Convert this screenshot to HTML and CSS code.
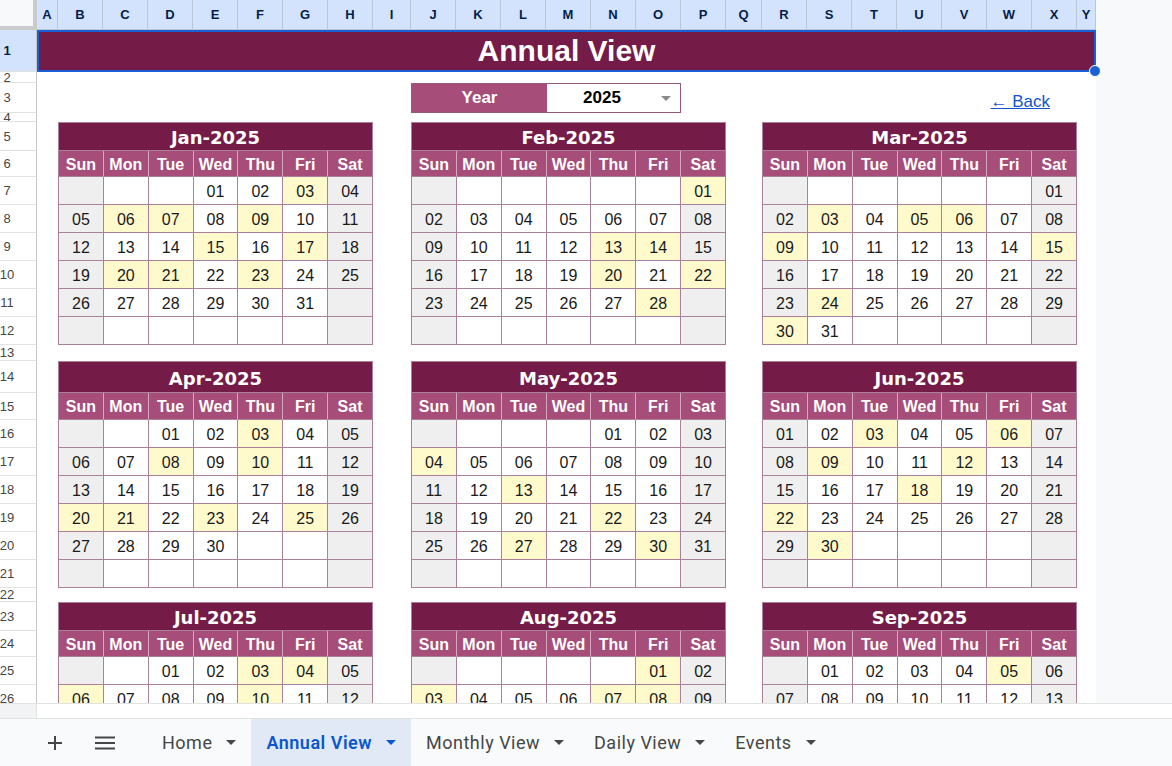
FILE: index.html
```html
<!DOCTYPE html>
<html lang="en">
<head>
<meta charset="utf-8">
<title>Annual View</title>
<link rel="stylesheet" href="styles.css">
</head>
<body>
<div class="sheet-area">
  <div class="grid">
    <div class="corner"></div>
    <div class="ch">A</div><div class="ch">B</div><div class="ch">C</div><div class="ch">D</div><div class="ch">E</div><div class="ch">F</div><div class="ch">G</div><div class="ch">H</div><div class="ch">I</div><div class="ch">J</div><div class="ch">K</div><div class="ch">L</div><div class="ch">M</div><div class="ch">N</div><div class="ch">O</div><div class="ch">P</div><div class="ch">Q</div><div class="ch">R</div><div class="ch">S</div><div class="ch">T</div><div class="ch">U</div><div class="ch">V</div><div class="ch">W</div><div class="ch">X</div><div class="ch">Y</div>

    <div class="rh sel">1</div><div class="rh">2</div><div class="rh">3</div><div class="rh">4</div><div class="rh">5</div><div class="rh">6</div><div class="rh">7</div><div class="rh">8</div><div class="rh">9</div><div class="rh">10</div><div class="rh">11</div><div class="rh">12</div><div class="rh">13</div><div class="rh">14</div><div class="rh">15</div><div class="rh">16</div><div class="rh">17</div><div class="rh">18</div><div class="rh">19</div><div class="rh">20</div><div class="rh">21</div><div class="rh">22</div><div class="rh">23</div><div class="rh">24</div><div class="rh">25</div><div class="rh">26</div>

    <div class="title">Annual View<span class="handle"></span></div>

    <div class="yearbox">
      <div class="ylabel">Year</div>
      <div class="yval"><span class="ytext">2025</span><span class="ycaret"></span></div>
    </div>

    <div class="back"><a href="#">← Back</a></div>

    <!-- Jan -->
    <div class="cal c-l b1">
      <div class="mt">Jan-2025</div>
      <div class="dw">Sun</div><div class="dw">Mon</div><div class="dw">Tue</div><div class="dw">Wed</div><div class="dw">Thu</div><div class="dw">Fri</div><div class="dw">Sat</div>
      <div class="d"></div><div class="d"></div><div class="d"></div><div class="d">01</div><div class="d">02</div><div class="d hl">03</div><div class="d">04</div>
      <div class="d">05</div><div class="d hl">06</div><div class="d hl">07</div><div class="d">08</div><div class="d hl">09</div><div class="d">10</div><div class="d">11</div>
      <div class="d">12</div><div class="d">13</div><div class="d">14</div><div class="d hl">15</div><div class="d">16</div><div class="d hl">17</div><div class="d">18</div>
      <div class="d">19</div><div class="d hl">20</div><div class="d hl">21</div><div class="d">22</div><div class="d hl">23</div><div class="d">24</div><div class="d">25</div>
      <div class="d">26</div><div class="d">27</div><div class="d">28</div><div class="d">29</div><div class="d">30</div><div class="d">31</div><div class="d"></div>
      <div class="d"></div><div class="d"></div><div class="d"></div><div class="d"></div><div class="d"></div><div class="d"></div><div class="d"></div>
    </div>

    <!-- Feb -->
    <div class="cal c-m b1">
      <div class="mt">Feb-2025</div>
      <div class="dw">Sun</div><div class="dw">Mon</div><div class="dw">Tue</div><div class="dw">Wed</div><div class="dw">Thu</div><div class="dw">Fri</div><div class="dw">Sat</div>
      <div class="d"></div><div class="d"></div><div class="d"></div><div class="d"></div><div class="d"></div><div class="d"></div><div class="d hl">01</div>
      <div class="d">02</div><div class="d">03</div><div class="d">04</div><div class="d">05</div><div class="d">06</div><div class="d">07</div><div class="d">08</div>
      <div class="d">09</div><div class="d">10</div><div class="d">11</div><div class="d">12</div><div class="d hl">13</div><div class="d hl">14</div><div class="d">15</div>
      <div class="d">16</div><div class="d">17</div><div class="d">18</div><div class="d">19</div><div class="d hl">20</div><div class="d">21</div><div class="d hl">22</div>
      <div class="d">23</div><div class="d">24</div><div class="d">25</div><div class="d">26</div><div class="d">27</div><div class="d hl">28</div><div class="d"></div>
      <div class="d"></div><div class="d"></div><div class="d"></div><div class="d"></div><div class="d"></div><div class="d"></div><div class="d"></div>
    </div>

    <!-- Mar -->
    <div class="cal c-r b1">
      <div class="mt">Mar-2025</div>
      <div class="dw">Sun</div><div class="dw">Mon</div><div class="dw">Tue</div><div class="dw">Wed</div><div class="dw">Thu</div><div class="dw">Fri</div><div class="dw">Sat</div>
      <div class="d"></div><div class="d"></div><div class="d"></div><div class="d"></div><div class="d"></div><div class="d"></div><div class="d">01</div>
      <div class="d">02</div><div class="d hl">03</div><div class="d">04</div><div class="d hl">05</div><div class="d hl">06</div><div class="d">07</div><div class="d">08</div>
      <div class="d hl">09</div><div class="d">10</div><div class="d">11</div><div class="d">12</div><div class="d">13</div><div class="d">14</div><div class="d hl">15</div>
      <div class="d">16</div><div class="d">17</div><div class="d">18</div><div class="d">19</div><div class="d">20</div><div class="d">21</div><div class="d">22</div>
      <div class="d">23</div><div class="d hl">24</div><div class="d">25</div><div class="d">26</div><div class="d">27</div><div class="d">28</div><div class="d">29</div>
      <div class="d hl">30</div><div class="d">31</div><div class="d"></div><div class="d"></div><div class="d"></div><div class="d"></div><div class="d"></div>
    </div>

    <!-- Apr -->
    <div class="cal tall c-l b2">
      <div class="mt">Apr-2025</div>
      <div class="dw">Sun</div><div class="dw">Mon</div><div class="dw">Tue</div><div class="dw">Wed</div><div class="dw">Thu</div><div class="dw">Fri</div><div class="dw">Sat</div>
      <div class="d"></div><div class="d"></div><div class="d">01</div><div class="d">02</div><div class="d hl">03</div><div class="d">04</div><div class="d">05</div>
      <div class="d">06</div><div class="d">07</div><div class="d hl">08</div><div class="d">09</div><div class="d hl">10</div><div class="d">11</div><div class="d">12</div>
      <div class="d">13</div><div class="d">14</div><div class="d">15</div><div class="d">16</div><div class="d">17</div><div class="d">18</div><div class="d">19</div>
      <div class="d hl">20</div><div class="d hl">21</div><div class="d">22</div><div class="d hl">23</div><div class="d">24</div><div class="d hl">25</div><div class="d">26</div>
      <div class="d">27</div><div class="d">28</div><div class="d">29</div><div class="d">30</div><div class="d"></div><div class="d"></div><div class="d"></div>
      <div class="d"></div><div class="d"></div><div class="d"></div><div class="d"></div><div class="d"></div><div class="d"></div><div class="d"></div>
    </div>

    <!-- May -->
    <div class="cal tall c-m b2">
      <div class="mt">May-2025</div>
      <div class="dw">Sun</div><div class="dw">Mon</div><div class="dw">Tue</div><div class="dw">Wed</div><div class="dw">Thu</div><div class="dw">Fri</div><div class="dw">Sat</div>
      <div class="d"></div><div class="d"></div><div class="d"></div><div class="d"></div><div class="d">01</div><div class="d">02</div><div class="d">03</div>
      <div class="d hl">04</div><div class="d">05</div><div class="d">06</div><div class="d">07</div><div class="d">08</div><div class="d">09</div><div class="d">10</div>
      <div class="d">11</div><div class="d">12</div><div class="d hl">13</div><div class="d">14</div><div class="d">15</div><div class="d">16</div><div class="d">17</div>
      <div class="d">18</div><div class="d">19</div><div class="d">20</div><div class="d">21</div><div class="d hl">22</div><div class="d">23</div><div class="d">24</div>
      <div class="d">25</div><div class="d">26</div><div class="d hl">27</div><div class="d">28</div><div class="d">29</div><div class="d hl">30</div><div class="d">31</div>
      <div class="d"></div><div class="d"></div><div class="d"></div><div class="d"></div><div class="d"></div><div class="d"></div><div class="d"></div>
    </div>

    <!-- Jun -->
    <div class="cal tall c-r b2">
      <div class="mt">Jun-2025</div>
      <div class="dw">Sun</div><div class="dw">Mon</div><div class="dw">Tue</div><div class="dw">Wed</div><div class="dw">Thu</div><div class="dw">Fri</div><div class="dw">Sat</div>
      <div class="d">01</div><div class="d">02</div><div class="d hl">03</div><div class="d">04</div><div class="d">05</div><div class="d hl">06</div><div class="d">07</div>
      <div class="d">08</div><div class="d hl">09</div><div class="d">10</div><div class="d">11</div><div class="d hl">12</div><div class="d">13</div><div class="d">14</div>
      <div class="d">15</div><div class="d">16</div><div class="d">17</div><div class="d hl">18</div><div class="d">19</div><div class="d">20</div><div class="d">21</div>
      <div class="d hl">22</div><div class="d">23</div><div class="d">24</div><div class="d">25</div><div class="d">26</div><div class="d">27</div><div class="d">28</div>
      <div class="d">29</div><div class="d hl">30</div><div class="d"></div><div class="d"></div><div class="d"></div><div class="d"></div><div class="d"></div>
      <div class="d"></div><div class="d"></div><div class="d"></div><div class="d"></div><div class="d"></div><div class="d"></div><div class="d"></div>
    </div>

    <!-- Jul -->
    <div class="cal short c-l b3">
      <div class="mt">Jul-2025</div>
      <div class="dw">Sun</div><div class="dw">Mon</div><div class="dw">Tue</div><div class="dw">Wed</div><div class="dw">Thu</div><div class="dw">Fri</div><div class="dw">Sat</div>
      <div class="d"></div><div class="d"></div><div class="d">01</div><div class="d">02</div><div class="d hl">03</div><div class="d hl">04</div><div class="d">05</div>
      <div class="d hl">06</div><div class="d">07</div><div class="d">08</div><div class="d">09</div><div class="d hl">10</div><div class="d">11</div><div class="d">12</div>
    </div>

    <!-- Aug -->
    <div class="cal short c-m b3">
      <div class="mt">Aug-2025</div>
      <div class="dw">Sun</div><div class="dw">Mon</div><div class="dw">Tue</div><div class="dw">Wed</div><div class="dw">Thu</div><div class="dw">Fri</div><div class="dw">Sat</div>
      <div class="d"></div><div class="d"></div><div class="d"></div><div class="d"></div><div class="d"></div><div class="d hl">01</div><div class="d">02</div>
      <div class="d hl">03</div><div class="d">04</div><div class="d">05</div><div class="d">06</div><div class="d hl">07</div><div class="d hl">08</div><div class="d">09</div>
    </div>

    <!-- Sep -->
    <div class="cal short c-r b3">
      <div class="mt">Sep-2025</div>
      <div class="dw">Sun</div><div class="dw">Mon</div><div class="dw">Tue</div><div class="dw">Wed</div><div class="dw">Thu</div><div class="dw">Fri</div><div class="dw">Sat</div>
      <div class="d"></div><div class="d">01</div><div class="d">02</div><div class="d">03</div><div class="d">04</div><div class="d hl">05</div><div class="d">06</div>
      <div class="d">07</div><div class="d">08</div><div class="d">09</div><div class="d">10</div><div class="d">11</div><div class="d">12</div><div class="d">13</div>
    </div>
  </div>
  <div class="side"></div>
</div>

<div class="hscroll"><div class="hscroll-l"></div></div>

<div class="tabbar">
  <div class="tb-btn add">
    <svg width="18" height="18" viewBox="0 0 18 18"><path d="M9 2v14M2 9h14" stroke="#444746" stroke-width="2" fill="none"/></svg>
  </div>
  <div class="tb-btn menu">
    <svg width="20" height="14" viewBox="0 0 20 14"><path d="M0 1.5h20M0 7h20M0 12.5h20" stroke="#444746" stroke-width="2" fill="none"/></svg>
  </div>
  <div class="tabs">
    <div class="tab"><span>Home</span><span class="caret"></span></div>
    <div class="tab active"><span>Annual View</span><span class="caret"></span></div>
    <div class="tab"><span>Monthly View</span><span class="caret"></span></div>
    <div class="tab"><span>Daily View</span><span class="caret"></span></div>
    <div class="tab"><span>Events</span><span class="caret"></span></div>
  </div>
</div>
</body>
</html>
```
FILE: styles.css
```css
* { box-sizing: border-box; margin: 0; padding: 0; }

body {
  margin: 0;
  width: 1172px;
  height: 766px;
  overflow: hidden;
  background: #ffffff;
  font-family: "Liberation Sans", Arial, sans-serif;
  display: flex;
  flex-direction: column;
}

/* ---------- sheet ---------- */
.sheet-area {
  flex: none;
  height: 703px;
  display: flex;
  overflow: hidden;
}

.grid {
  flex: none;
  width: 1096px;
  display: grid;
  grid-template-columns: 37px 21px repeat(7, 45px) 38px repeat(7, 45px) 36px repeat(7, 45px) 19px;
  grid-template-rows: 30px 42px 11px 30px 9px 29px 26px repeat(6, 28px) 16px 32px 27px repeat(6, 28px) 14px 29px 26px 28px 28px;
  align-content: start;
  align-self: flex-start;
  background: #ffffff;
}

.side {
  flex: 1;
  background: #f8f9fa;
}

.corner {
  background: #f8f9fa;
  border-right: 4px solid #c9cbcd;
  border-bottom: 4px solid #c9cbcd;
}

.ch {
  background: #d3e3fd;
  border-right: 1px solid #b9c4d6;
  border-bottom: 1px solid #b9c4d6;
  display: flex;
  align-items: center;
  justify-content: center;
  font-size: 13px;
  font-weight: bold;
  color: #041e49;
}

.rh {
  grid-column: 1;
  background: #ffffff;
  border-right: 1px solid #c4c7c5;
  border-bottom: 1px solid #e1e3e1;
  display: flex;
  align-items: center;
  justify-content: center;
  padding-right: 22px;
  overflow: hidden;
  font-size: 13px;
  color: #444746;
  line-height: 15px;
}

.rh.sel {
  background: #d3e3fd;
  color: #041e49;
  font-weight: bold;
}

/* ---------- title ---------- */
.title {
  grid-column: 2 / 27;
  grid-row: 2;
  position: relative;
  background: #741b47;
  border: 2px solid #1a5fd6;
  display: flex;
  align-items: center;
  justify-content: center;
  color: #ffffff;
  font-size: 30px;
  font-weight: bold;
}

.handle {
  position: absolute;
  right: -7px;
  bottom: -7px;
  width: 12px;
  height: 12px;
  border-radius: 50%;
  background: #1a62d4;
  border: 1px solid #ffffff;
}

/* ---------- year selector ---------- */
.yearbox {
  grid-column: 11 / 17;
  grid-row: 4;
  display: grid;
  grid-template-columns: 135px 1fr;
  border: 1px solid #8f5a79;
}

.ylabel {
  background: #a64d79;
  color: #ffffff;
  font-size: 17px;
  font-weight: bold;
  display: flex;
  align-items: center;
  justify-content: center;
}

.yval {
  background: #ffffff;
  display: flex;
  align-items: center;
}

.ytext {
  flex: 1;
  text-align: center;
  font-size: 17px;
  font-weight: bold;
  color: #000000;
  padding-right: 4px;
}

.ycaret {
  width: 0;
  height: 0;
  margin-right: 9px;
  border-left: 5px solid transparent;
  border-right: 5px solid transparent;
  border-top: 5px solid #8a8a8a;
}

/* ---------- back link ---------- */
.back {
  grid-column: 19 / 26;
  grid-row: 4;
  display: flex;
  justify-content: flex-end;
  align-items: flex-end;
  padding: 0 27px 1px 0;
}

.back a {
  color: #1155cc;
  font-size: 17px;
  line-height: 20px;
  text-decoration: underline;
}

/* ---------- calendars ---------- */
.c-l { grid-column: 3 / 10; }
.c-m { grid-column: 11 / 18; }
.c-r { grid-column: 19 / 26; }
.b1 { grid-row: 6 / 14; }
.b2 { grid-row: 15 / 23; }
.b3 { grid-row: 24 / 28; }

.cal {
  display: grid;
  grid-template-columns: repeat(7, 1fr);
  grid-template-rows: 28px 26px repeat(6, 28px);
  border-top: 1px solid #ab8199;
  border-left: 1px solid #ab8199;
}

.cal.tall {
  grid-template-rows: 31px 27px repeat(6, 28px);
}

.cal.short {
  grid-template-rows: 28px 26px repeat(2, 28px);
}

.mt {
  grid-column: 1 / -1;
  background: #741b47;
  color: #ffffff;
  font-family: "Comic Sans MS", "DejaVu Sans", sans-serif;
  font-size: 18px;
  font-weight: bold;
  display: flex;
  align-items: center;
  justify-content: center;
  padding-top: 2px;
  border-right: 1px solid #ab8199;
  border-bottom: 1px solid #ab8199;
}

.dw {
  background: #a64d79;
  color: #ffffff;
  font-size: 16px;
  font-weight: bold;
  display: flex;
  align-items: center;
  justify-content: center;
  padding-top: 2px;
  border-right: 1px solid #d7a9c1;
  border-bottom: 1px solid #ab8199;
}

.dw:nth-child(8) {
  border-right-color: #ab8199;
}

.d {
  background: #ffffff;
  color: #1a1a1a;
  font-size: 16px;
  display: flex;
  align-items: center;
  justify-content: center;
  padding-top: 2px;
  border-right: 1px solid #ab8199;
  border-bottom: 1px solid #ab8199;
}

.d:nth-child(7n+1),
.d:nth-child(7n+2) {
  background: #efefef;
}

.d.hl {
  background: #fffacc;
}

/* ---------- bottom bars ---------- */
.hscroll {
  flex: none;
  height: 15px;
  display: flex;
  border-top: 1px solid #e1e3e1;
  background: #ffffff;
}

.hscroll-l {
  width: 37px;
  background: #f1f3f4;
  border-right: 1px solid #e1e3e1;
}

.tabbar {
  flex: none;
  height: 48px;
  display: flex;
  align-items: stretch;
  background: #f9fafc;
  border-top: 1px solid #e1e3e1;
  padding-left: 35px;
  font-family: Roboto, "Liberation Sans", sans-serif;
}

.tb-btn {
  width: 40px;
  display: flex;
  align-items: center;
  justify-content: center;
}

.tb-btn.menu {
  margin-left: 10px;
}

.tabs {
  display: flex;
  margin-left: 22px;
}

.tab {
  display: flex;
  align-items: center;
  gap: 14px;
  padding: 0 15px;
  font-size: 18px;
  line-height: 22px;
  color: #444746;
  letter-spacing: 0.5px;
}

.tab.active {
  background: #e1e9f7;
  color: #0b57d0;
  font-weight: 600;
}

.caret {
  width: 0;
  height: 0;
  border-left: 5px solid transparent;
  border-right: 5px solid transparent;
  border-top: 5px solid #444746;
}

.tab.active .caret {
  border-top-color: #0b57d0;
}
```
